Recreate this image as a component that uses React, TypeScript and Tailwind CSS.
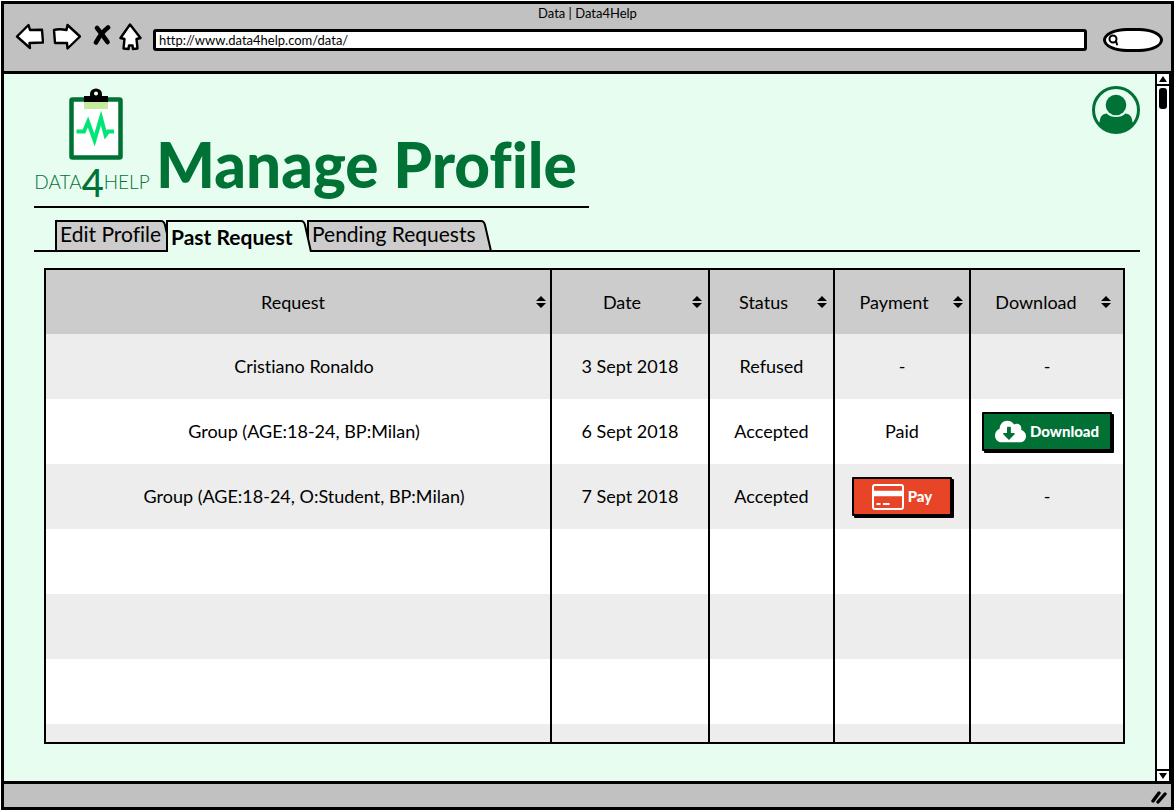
import { FaCloudDownloadAlt } from "react-icons/fa";
import type { ReactNode } from "react";

const sans = "font-['Lato','Open_Sans',sans-serif] [font-variant-ligatures:none]";

const columns = [
  { name: "Request", col: "", head: "pl-1 pr-1" },
  { name: "Date", col: "w-[158px]", head: "pr-1.5" },
  { name: "Status", col: "w-[125px]", head: "pr-1.5" },
  { name: "Payment", col: "w-[136px]", head: "pr-1.5" },
  { name: "Download", col: "w-[152px]", head: "pr-3" },
];

function NavIcon({ label, path, box }: { label: string; path: string; box: string }) {
  return (
    <button type="button" aria-label={label} className="shrink-0">
      <svg className={box} fill="#fff" stroke="#000" strokeWidth="2.4" strokeLinejoin="round" strokeLinecap="round">
        <path d={path} />
      </svg>
    </button>
  );
}

function BrowserBar() {
  return (
    <header className="h-[70px] shrink-0 border-b-[3px] border-black bg-[#c1c1c1]">
      <div className="h-[18px] text-center text-[13px] leading-[18px]">Data | Data4Help</div>
      <div className="flex items-center pr-2 pl-[11px]">
        <nav aria-label="Browser" className="flex items-center gap-2">
          <NavIcon label="Back" box="h-7 w-[29px]" path="M2 13.500 L13.500 2 L15 7 L27 6.800 L28 19.500 L14.500 20 L15 25 Z" />
          <NavIcon label="Forward" box="h-7 w-[29px]" path="M2 7 Q7 5.500 14.500 7 L15.500 2 L28 13.500 L15.500 25.500 L15 20 L3 20 Z" />
          <button type="button" aria-label="Stop" className="ml-1 shrink-0">
            <svg className="h-7 w-[18px]" fill="none" stroke="#000" strokeLinecap="round">
              <path d="M4 5 Q9 11 14.500 19" strokeWidth="4.600" />
              <path d="M15 4.500 Q8 10 3 19.500" strokeWidth="4.600" />
            </svg>
          </button>
          <NavIcon label="Home" box="h-7 w-6" path="M11 1.500 L21.500 15 L17.500 16 L18.500 25.500 L14 26 L13.500 22.500 L10 22.500 L9.500 26 L4.500 25.500 L5.500 16 L1.500 15 Z" />
        </nav>
        <input
          aria-label="Address"
          type="text"
          defaultValue="http://www.data4help.com/data/"
          className="mt-1.5 ml-2.5 h-[22px] min-w-0 flex-1 rounded-[3px] border-[3px] border-black bg-white px-[3px] text-[13px] leading-4 outline-none"
        />
        <label className="mt-1.5 ml-4 flex h-6 w-[60px] shrink-0 items-center rounded-[40%/50%] border-[3px] border-black bg-white pl-0.5">
          <svg className="h-3 w-3 shrink-0" fill="none" stroke="#000" strokeWidth="2" strokeLinecap="round">
            <circle cx="5" cy="5" r="3.500" />
            <path d="M8 7 L9 10.500" />
          </svg>
          <input type="search" aria-label="Search" className="w-full min-w-0 bg-transparent text-[13px] outline-none" />
        </label>
      </div>
    </header>
  );
}

function Logo() {
  return (
    <div className="flex w-[116px] shrink-0 flex-col items-center text-[#007236]">
      <svg className="ml-2 h-[76px] w-14" viewBox="0 0 56 76" aria-hidden="true">
        <rect x="3.500" y="13.500" width="49" height="58" rx="1" fill="#fff" stroke="#007236" strokeWidth="4.500" />
        <rect x="16" y="16" width="24" height="7" fill="#c5ea9b" />
        <path d="M16 10 H22 V8 A6 5.500 0 0 1 34 8 V10 H40 V16 H16 Z" fill="#000" />
        <circle cx="28" cy="7.500" r="2" fill="#fff" />
        <path d="M8.500 45.500 H16 L20 36 L26.500 54 L33 32 L37.500 49 L40 45.500 H46" fill="none" stroke="#00e676" strokeWidth="4" />
      </svg>
      <div className="flex h-10 items-center text-[19px] leading-10 font-light whitespace-nowrap">
        DATA<span className="text-[38px] font-medium">4</span>HELP
      </div>
    </div>
  );
}

function ProfileIcon() {
  return (
    <svg className="h-12 w-12" viewBox="0 0 48 48" fill="#007236">
      <circle cx="24" cy="24" r="22.500" fill="none" stroke="#007236" strokeWidth="3" />
      <circle cx="24" cy="19" r="10.300" />
      <path d="M7.500 36 Q8 28 14.500 27.500 Q18 31 24 31 Q30 31 33.500 27.500 Q40 28 40.500 36 L42 38 Q36 47 24 47 Q12 47 6 38 Z" />
    </svg>
  );
}

function CardIcon() {
  return (
    <svg className="h-[26px] w-8" viewBox="0 0 32 26" fill="none" stroke="#fff" aria-hidden="true">
      <rect x="1" y="1" width="30" height="24" rx="2" strokeWidth="2" />
      <path d="M1 9.500 H31" strokeWidth="5.500" />
      <path d="M4.500 20 H8.500 M11 20 H17.500" strokeWidth="2" />
    </svg>
  );
}

function Tab({ children, active, fit }: { children: ReactNode; active?: boolean; fit: string }) {
  return (
    <button
      type="button"
      role="tab"
      aria-selected={!!active}
      className={`relative flex h-8 items-stretch ${active ? "z-10 font-bold" : ""} ${fit}`}
    >
      <span
        className={`flex flex-1 items-center border-t-2 border-l-2 border-black pl-[3px] whitespace-nowrap ${active ? "bg-[#e6fdf0]" : "border-b-2 bg-[#cccccc] pb-1"}`}
      >
        {children}
      </span>
      <svg className="h-8 w-[11px] shrink-0" aria-hidden="true">
        <path d="M0 1 Q3 1 4 5 L10 32 H0 Z" fill={active ? "#e6fdf0" : "#cccccc"} />
        <path d={active ? "M0 1 Q3 1 4 5 L10 32" : "M0 1 Q3 1 4 5 L10 31 H0"} fill="none" stroke="#000" strokeWidth="2" />
      </svg>
    </button>
  );
}

function SortIcon() {
  return (
    <svg className="h-3 w-[10px] shrink-0" viewBox="0 0 10 12" aria-hidden="true">
      <path d="M5 0 L10 5 H0 Z M0 7 H10 L5 12 Z" />
    </svg>
  );
}

function ActionButton({ tone, icon, children }: { tone: string; icon: ReactNode; children: ReactNode }) {
  return (
    <button
      type="button"
      className={`flex h-[39px] items-center justify-center gap-1 rounded-[1px] border-2 border-black text-[15px] font-black text-white shadow-[2px_2px_0_#000] ${tone}`}
    >
      {icon}
      {children}
    </button>
  );
}

const download = (
  <ActionButton tone="w-[130px] bg-[#007034]" icon={<FaCloudDownloadAlt className="h-[25px] w-[31px]" />}>
    Download
  </ActionButton>
);

const pay = (
  <ActionButton tone="w-[100px] bg-[#e84427]" icon={<CardIcon />}>
    Pay
  </ActionButton>
);

const rows: ReactNode[][] = [
  ["Cristiano Ronaldo", "3 Sept 2018", "Refused", "-", "-"],
  ["Group (AGE:18-24, BP:Milan)", "6 Sept 2018", "Accepted", "Paid", download],
  ["Group (AGE:18-24, O:Student, BP:Milan)", "7 Sept 2018", "Accepted", pay, "-"],
  ["", "", "", "", ""],
  ["", "", "", "", ""],
  ["", "", "", "", ""],
];

const line = "border-r-2 border-black last:border-r-0";

function RequestTable() {
  return (
    <div className="mr-[15px] ml-2.5 border-2 border-black bg-white">
      <table className="w-full table-fixed border-separate border-spacing-0 text-[18px]">
        <colgroup>
          {columns.map((c) => (
            <col key={c.name} className={c.col} />
          ))}
        </colgroup>
        <thead>
          <tr className="h-16 bg-[#cccccc]">
            {columns.map((c) => (
              <th key={c.name} scope="col" className={`p-0 font-normal ${line}`}>
                <button type="button" className={`flex w-full items-center ${c.head}`}>
                  <span className="flex-1 text-center">{c.name}</span>
                  <SortIcon />
                </button>
              </th>
            ))}
          </tr>
        </thead>
        <tbody>
          {rows.map((cells, r) => (
            <tr key={r} className="h-[65px] odd:bg-[#ededed]">
              {cells.map((cell, i) => (
                <td key={i} className={`p-0 text-center first:pl-3 ${line}`}>
                  {typeof cell === "string" ? cell : <div className="flex justify-center">{cell}</div>}
                </td>
              ))}
            </tr>
          ))}
          <tr className="h-[18px] odd:bg-[#ededed]">
            {columns.map((c) => (
              <td key={c.name} className={`p-0 ${line}`} />
            ))}
          </tr>
        </tbody>
      </table>
    </div>
  );
}

function ScrollBar() {
  return (
    <div className="flex w-4 shrink-0 flex-col border-x-2 border-black bg-white" aria-hidden="true">
      <svg className="h-3 w-3 border-b-2 border-black">
        <path d="M6 2 L10 8 H2 Z" />
      </svg>
      <div className="mt-0.5 ml-0.5 h-[21px] w-2 rounded-[3px] bg-black" />
      <svg className="mt-auto h-3 w-3 border-t-2 border-black">
        <path d="M2 2 H10 L6 8 Z" />
      </svg>
    </div>
  );
}

export default function App() {
  return (
    <div className={`flex min-h-screen flex-col p-px text-black ${sans}`}>
      <div className="flex flex-1 flex-col border-[3px] border-black bg-[#e6fdf0]">
        <BrowserBar />
        <div className="flex flex-1">
          <main className="min-w-0 flex-1 pt-3 pr-[15px] pb-9 pl-[30px]">
            <div className="flex items-start justify-between">
              <div className="flex items-end border-b-2 border-black pr-3 pb-1">
                <Logo />
                <h1 className="pl-1.5 text-[62px] leading-[76px] font-black whitespace-nowrap text-[#007236]">Manage Profile</h1>
              </div>
              <button type="button" aria-label="Profile" className="shrink-0">
                <ProfileIcon />
              </button>
            </div>
            <div role="tablist" className="mt-3 flex text-[21px]">
              <div className="w-[21px] border-b-2 border-black" />
              <Tab fit="w-[116px]">Edit Profile</Tab>
              <Tab active fit="-ml-[5px] w-[146px]">Past Request</Tab>
              <Tab fit="-ml-[5px] w-[185px]">Pending Requests</Tab>
              <div className="flex-1 border-b-2 border-black" />
            </div>
            <div className="mt-4">
              <RequestTable />
            </div>
          </main>
          <ScrollBar />
        </div>
        <footer className="flex h-[26px] shrink-0 items-center justify-end border-t-[3px] border-black bg-[#c1c1c1] pr-1">
          <svg className="h-4 w-4" fill="none" stroke="#000" strokeWidth="3.400" strokeLinecap="round" aria-hidden="true">
            <path d="M2 13 L8 5 M7 14 L14 6" />
          </svg>
        </footer>
      </div>
    </div>
  );
}
